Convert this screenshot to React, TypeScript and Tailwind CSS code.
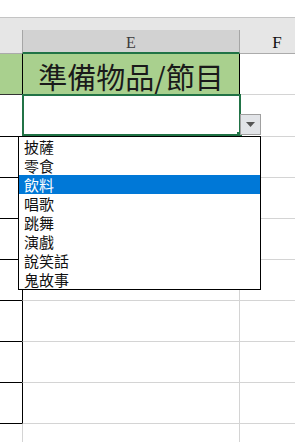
import { FC } from "react";

const items = ["披薩", "零食", "飲料", "唱歌", "跳舞", "演戲", "說笑話", "鬼故事"];
const cjk = { fontFamily: '"Noto Sans CJK TC", "Noto Sans", sans-serif' };
const serif = { fontFamily: '"Liberation Serif", "DejaVu Serif", serif' };

const GridRow: FC<{ last?: boolean }> = ({ last }) => (
  <div className="flex h-[41px]">
    <div className={`w-[22px] shrink-0 ${last ? "" : "border-b border-black"}`} />
    <div
      className={`w-[218px] shrink-0 border-r border-[#d4d4d4] ${
        last ? "border-l border-l-[#d4d4d4]" : "border-l border-l-black border-b border-b-[#d4d4d4]"
      }`}
    />
    <div className={`w-[74px] shrink-0 ${last ? "" : "border-b border-[#d4d4d4]"}`} />
  </div>
);

const App: FC = () => {
  return (
    <div className="relative w-[295px] h-[442px] overflow-hidden bg-white">
      <div className="h-[17px] bg-white" />
      <div className="h-px bg-[#c4c4c4]" />
      <div className="h-[12px] bg-[#e6e6e6]" />

      {/* column headers */}
      <div className="flex h-[24px]">
        <div className="w-[22px] shrink-0 bg-[#e6e6e6] border-b border-[#ababab]" />
        <div
          className="w-[218px] shrink-0 bg-[#d2d2d2] border-l border-r border-[#a6a6a6] border-b-2 border-b-[#217346] flex items-center justify-center pt-[3px] text-[16px] text-[#3a3a3a]"
          style={serif}
        >
          E
        </div>
        <div
          className="w-[74px] shrink-0 bg-[#e6e6e6] border-b border-[#ababab] flex items-center justify-center pt-[2px] text-[17px] text-[#111]"
          style={serif}
        >
          F
        </div>
      </div>

      {/* title row */}
      <div className="flex h-[41px]">
        <div className="w-[22px] shrink-0 bg-[#a9d08e] border-b border-[#333]" />
        <div
          className="w-[218px] shrink-0 bg-[#a9d08e] border-l border-r border-black border-b flex items-center justify-center pt-[5px] text-[29px] leading-none text-[#1a1a1a]"
          style={cjk}
        >
          準備物品/節目
        </div>
        <div className="w-[74px] shrink-0 border-b border-[#d4d4d4]" />
      </div>

      {/* active row */}
      <div className="flex h-[42px]">
        <div className="w-[22px] shrink-0 border-b border-black" />
        <div className="w-[218px] shrink-0 border-l border-l-black border-r border-r-[#d4d4d4] border-b border-b-[#d4d4d4]" />
        <div className="w-[74px] shrink-0 border-b border-[#d4d4d4]" />
      </div>

      {Array.from({ length: 7 }).map((_, i) => (
        <GridRow key={i} />
      ))}
      <GridRow last />

      {/* selection */}
      <div className="absolute left-[22px] top-[94px] w-[219px] h-[42px] border-2 border-[#217346]" />
      <div className="absolute left-[237px] top-[132px] w-[5px] h-[5px] bg-[#217346]" />

      {/* dropdown button */}
      <div className="absolute left-[240px] top-[114px] w-[21px] h-[21px] border border-[#a0a0a0] bg-[#e2e4e8] flex items-center justify-center">
        <svg width="9" height="5" viewBox="0 0 9 5">
          <path d="M0 0 H9 L4.5 5 Z" fill="#555" />
        </svg>
      </div>

      {/* list */}
      <div className="absolute left-[18px] top-[136px] w-[243px] border border-black bg-white" style={cjk}>
        {items.map((t, i) => (
          <div
            key={t}
            className={`h-[19px] pl-[5px] text-[15px] leading-[19px] ${
              i === 2 ? "bg-[#0078d7] text-white" : "text-[#111]"
            }`}
          >
            {t}
          </div>
        ))}
      </div>
    </div>
  );
};

export default App;
